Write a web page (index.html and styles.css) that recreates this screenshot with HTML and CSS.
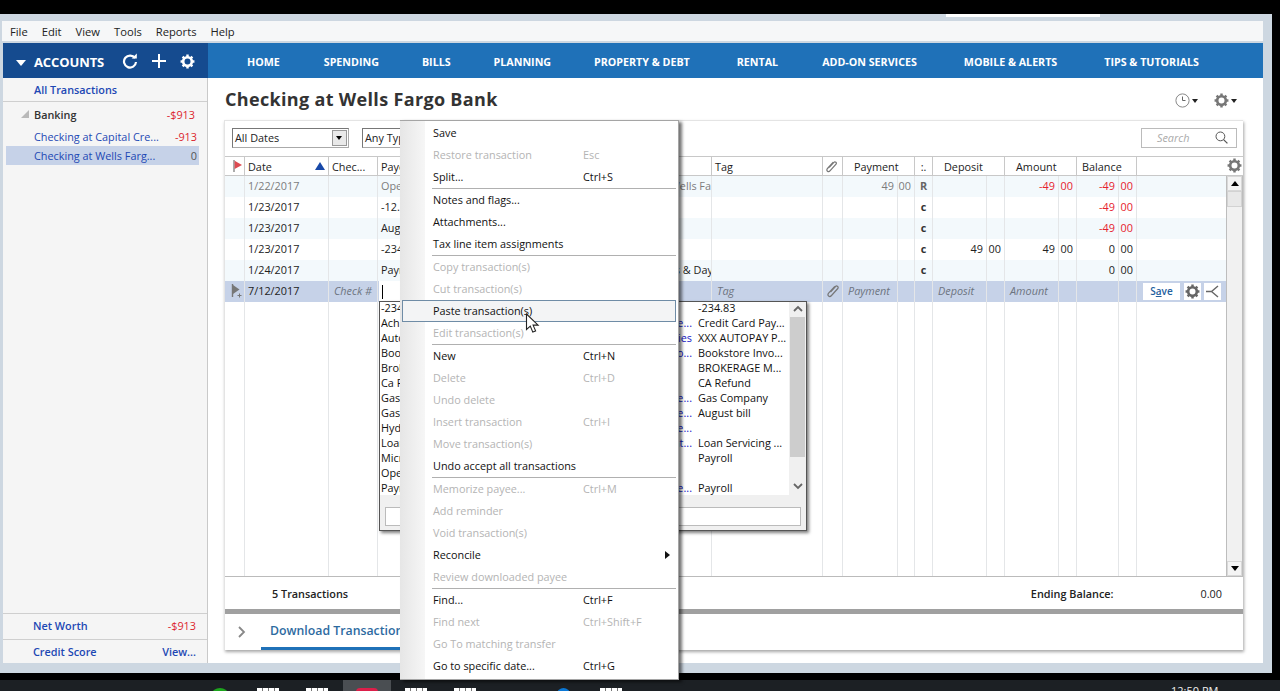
FILE: index.html
```html
<!DOCTYPE html>
<html lang="en">
<head>
<meta charset="utf-8">
<title>Checking at Wells Fargo Bank</title>
<link rel="stylesheet" href="styles.css">
</head>
<body>
<svg class="defs" width="0" height="0" aria-hidden="true">
  <symbol id="gear" viewBox="0 0 16 16">
    <circle cx="8" cy="8" r="4.6" fill="none" stroke="currentColor" stroke-width="2.8"/>
    <path d="M8 .6v3M8 12.4v3M.6 8h3M12.4 8h3M2.8 2.8 4.9 4.9M11.1 11.1l2.1 2.1M13.2 2.8 11.1 4.9M4.9 11.1l-2.1 2.1" stroke="currentColor" stroke-width="2.6" fill="none"/>
  </symbol>
</svg>

<div class="desk-top"><span class="desk-strip"></span></div>

<div class="window">
  <div class="menubar">
    <span>File</span><span>Edit</span><span>View</span><span>Tools</span><span>Reports</span><span>Help</span>
  </div>
  <div class="app">
    <header class="app-head">
      <div class="acc-head">
        <span class="acc-tri"></span>
        <span class="acc-label">ACCOUNTS</span>
        <svg class="acc-ico" width="16" height="16" viewBox="0 0 16 16"><path d="M13 5.2A6 6 0 1 0 14 9" fill="none" stroke="#fff" stroke-width="2.2"/><path d="M9.6 5.6h5.2V.6z" fill="#fff"/></svg>
        <svg class="acc-ico" width="16" height="16" viewBox="0 0 16 16"><path d="M8 1v14M1 8h14" stroke="#fff" stroke-width="2"/></svg>
        <svg class="acc-ico acc-gear" width="15" height="15"><use href="#gear"/></svg>
      </div>
      <nav class="nav">
        <span>HOME</span><span>SPENDING</span><span>BILLS</span><span>PLANNING</span><span>PROPERTY &amp; DEBT</span><span>RENTAL</span><span>ADD-ON SERVICES</span><span>MOBILE &amp; ALERTS</span><span>TIPS &amp; TUTORIALS</span>
      </nav>
    </header>
    <div class="app-body">
      <aside class="sidebar">
        <div class="side-all">All Transactions</div>
        <div class="side-group"><span class="side-open"></span><span class="side-gname">Banking</span><span class="neg">-$913</span></div>
        <div class="side-acct"><span class="link">Checking at Capital Cre...</span><span class="neg">-913</span></div>
        <div class="side-acct is-sel"><span class="link">Checking at Wells Farg...</span><span class="zero">0</span></div>
        <div class="side-fill"></div>
        <div class="side-foot side-net"><b class="link">Net Worth</b><span class="neg">-$913</span></div>
        <div class="side-foot side-last"><b class="link">Credit Score</b><b class="link">View...</b></div>
      </aside>
      <main class="main">
        <div class="title-row">
          <h1>Checking at Wells Fargo Bank</h1>
          <div class="title-tools">
            <svg width="15" height="15" viewBox="0 0 15 15"><circle cx="7.5" cy="7.5" r="6.6" fill="none" stroke="#888"/><path d="M7.5 3.5v4h3" fill="none" stroke="#666"/></svg><i class="caret"></i>
            <svg class="tool-gear" width="15" height="15"><use href="#gear"/></svg><i class="caret"></i>
          </div>
        </div>
        <section class="card">
          <div class="filters">
            <div class="sel sel-dates"><span>All Dates</span><i class="sel-btn"></i></div>
            <div class="sel sel-type"><span>Any Type</span></div>
            <div class="search"><span>Search</span><svg width="13" height="13" viewBox="0 0 13 13"><circle cx="5.4" cy="5.4" r="4.4" fill="none" stroke="#555"/><path d="m8.6 8.6 3.8 3.8" stroke="#555" stroke-width="1.3"/></svg></div>
          </div>
          <div class="thead cols-head">
            <div class="th"><svg width="10" height="12" viewBox="0 0 10 12"><path d="M1 0v12" stroke="#888" stroke-width="1.4"/><path d="M1.6 .8 9 5 1.6 9z" fill="#dd4b52"/></svg></div>
            <div class="th th-date">Date<i class="sort"></i></div>
            <div class="th">Chec...</div>
            <div class="th">Payee</div>
            <div class="th">Category</div>
            <div class="th">Tag</div>
            <div class="th th-c th-clip"><svg width="13" height="14" viewBox="0 0 14 15"><path d="M3.500 8 8.500 2.500c1.300-1.300 3.600.5 2.300 2L4.500 11.500c-2 2.300-4.700-.1-2.900-2.400L7.800 2.300" fill="none" stroke="#777" stroke-width="1.300"/></svg></div>
            <div class="th th-amt">Payment</div>
            <div class="th th-c">:.</div>
            <div class="th th-amt">Deposit</div>
            <div class="th th-amt">Amount</div>
            <div class="th th-bal">Balance</div>
            <div class="th th-gear"><svg width="15" height="15"><use href="#gear"/></svg></div>
          </div>
          <div class="tbody">
            <div class="rows">
              <div class="row alt dim">
                <div></div><div>1/22/2017</div><div></div><div>Opening Balance</div><div class="clip">[Checking at Wells Fargo]</div><div></div><div></div><div class="num">49</div><div class="num">00</div><div class="mk">R</div><div></div><div></div><div class="num neg">-49</div><div class="num neg">00</div><div class="num neg">-49</div><div class="num neg">00</div><div class="blank"></div>
              </div>
              <div class="row">
                <div></div><div>1/23/2017</div><div></div><div>-12.50</div><div></div><div></div><div></div><div></div><div></div><div class="mk">c</div><div></div><div></div><div></div><div></div><div class="num neg">-49</div><div class="num neg">00</div><div class="blank"></div>
              </div>
              <div class="row alt">
                <div></div><div>1/23/2017</div><div></div><div>August bill</div><div></div><div></div><div></div><div></div><div></div><div class="mk">c</div><div></div><div></div><div></div><div></div><div class="num neg">-49</div><div class="num neg">00</div><div class="blank"></div>
              </div>
              <div class="row">
                <div></div><div>1/23/2017</div><div></div><div>-234.83</div><div></div><div></div><div></div><div></div><div></div><div class="mk">c</div><div class="num">49</div><div class="num">00</div><div class="num">49</div><div class="num">00</div><div class="num">0</div><div class="num">00</div><div class="blank"></div>
              </div>
              <div class="row alt">
                <div></div><div>1/24/2017</div><div></div><div>Payroll</div><div class="clip clip-far">Kids' Activities &amp; Daycare</div><div></div><div></div><div></div><div></div><div class="mk">c</div><div></div><div></div><div></div><div></div><div class="num">0</div><div class="num">00</div><div class="blank"></div>
              </div>
              <div class="row edit">
                <div class="edit-flag"><svg width="12" height="14" viewBox="0 0 12 14"><path d="M1.500 0v13" stroke="#777" stroke-width="1.400"/><path d="M2 1l6.500 4.500L2 10z" fill="#777"/><path d="M8.500 9.500v4M6.500 11.500h4" stroke="#777"/></svg></div>
                <div>7/12/2017</div>
                <div class="ph ph-r">Check #</div>
                <div class="edit-payee"><i class="text-caret"></i></div>
                <div></div>
                <div class="ph">Tag</div>
                <div class="edit-clip"><svg width="14" height="15" viewBox="0 0 14 15"><path d="M3.500 8 8.500 2.500c1.300-1.300 3.600.5 2.300 2L4.500 11.500c-2 2.300-4.700-.1-2.900-2.400L7.800 2.300" fill="none" stroke="#777" stroke-width="1.200"/></svg></div>
                <div class="ph">Payment</div><div></div><div></div>
                <div class="ph">Deposit</div><div></div>
                <div class="ph">Amount</div><div></div>
                <div></div><div></div>
                <div class="edit-acts">
                  <span class="btn-save">S<u>a</u>ve</span>
                  <span class="btn-ico"><svg width="15" height="15"><use href="#gear"/></svg></span>
                  <span class="btn-ico"><svg width="15" height="13" viewBox="0 0 15 13"><path d="M1 6.500h5.500L13 1M6.500 6.500 13 12" fill="none" stroke="#666" stroke-width="1.400"/></svg></span>
                </div>
              </div>
              <div class="row filler">
                <div></div><div></div><div></div><div></div><div></div><div></div><div></div><div></div><div></div><div></div><div></div><div></div><div></div><div></div><div></div><div></div><div class="blank"></div>
              </div>
            </div>
            <div class="vscroll">
              <span class="vs-btn"><i class="up"></i></span>
              <span class="vs-thumb"></span>
              <span class="vs-track"></span>
              <span class="vs-btn"><i class="down"></i></span>
            </div>
          </div>
          <div class="summary"><b>5 Transactions</b><b class="end-l">Ending Balance:</b><span class="end-v">0.00</span></div>
          <div class="split-bar"></div>
          <div class="tabs">
            <svg width="10" height="14" viewBox="0 0 10 14"><path d="m2 2 5 5-5 5" fill="none" stroke="#888" stroke-width="1.800"/></svg>
            <span class="tab">Download Transactions</span>
          </div>
        </section>
      </main>
    </div>
  </div>
</div>

<div class="taskbar">
  <i class="tb tb-g"></i><i class="tb tb-w"></i><i class="tb tb-w"></i><span class="tb-active"><i class="tb tb-r"></i></span><i class="tb tb-w"></i><i class="tb tb-w"></i><i class="tb tb-b"></i><i class="tb tb-w"></i>
  <span class="clock">12:50 PM</span>
</div>

<div class="payee-drop">
  <div class="pd-main">
    <div class="pd-list">
      <div class="pd-row"><span>-234.83</span><span></span><span>-234.83</span></div>
      <div class="pd-row"><span>Ach Payment</span><span>Credit Card Payme...</span><span>Credit Card Pay...</span></div>
      <div class="pd-row"><span>Autopay</span><span>Bills &amp; Utilities</span><span>XXX AUTOPAY P...</span></div>
      <div class="pd-row"><span>Bookstore</span><span>Shopping:Bo...</span><span>Bookstore Invo...</span></div>
      <div class="pd-row"><span>Brokerage</span><span></span><span>BROKERAGE M...</span></div>
      <div class="pd-row"><span>Ca Refund</span><span></span><span>CA Refund</span></div>
      <div class="pd-row"><span>Gas Company</span><span>Utilities:Gas &amp; Ele...</span><span>Gas Company</span></div>
      <div class="pd-row"><span>Gas Bill</span><span>Utilities:Gas &amp; Ele...</span><span>August bill</span></div>
      <div class="pd-row"><span>Hydro</span><span>Utilities:Gas &amp; Ele...</span><span></span></div>
      <div class="pd-row"><span>Loan</span><span>Mortgage &amp; Rent...</span><span>Loan Servicing ...</span></div>
      <div class="pd-row"><span>Microsoft</span><span></span><span>Payroll</span></div>
      <div class="pd-row"><span>Opening Balance</span><span></span><span></span></div>
      <div class="pd-row"><span>Payroll</span><span>Income:Private...</span><span>Payroll</span></div>
    </div>
    <div class="pd-scroll">
      <svg width="10" height="7" viewBox="0 0 10 7"><path d="m1 6 4-4 4 4" fill="none" stroke="#666" stroke-width="1.800"/></svg>
      <span class="pd-thumb"></span>
      <svg width="10" height="7" viewBox="0 0 10 7"><path d="m1 1 4 4 4-4" fill="none" stroke="#666" stroke-width="1.800"/></svg>
    </div>
  </div>
  <div class="pd-foot"><div class="pd-input"></div></div>
</div>

<div class="ctx">
  <div class="mi"><span>Save</span></div>
  <div class="mi off"><span>Restore transaction</span><kbd>Esc</kbd></div>
  <div class="mi"><span>Split...</span><kbd>Ctrl+S</kbd></div>
  <hr>
  <div class="mi"><span>Notes and flags...</span></div>
  <div class="mi"><span>Attachments...</span></div>
  <div class="mi"><span>Tax line item assignments</span></div>
  <hr>
  <div class="mi off"><span>Copy transaction(s)</span></div>
  <div class="mi off"><span>Cut transaction(s)</span></div>
  <div class="mi hot"><span>Paste transaction(s)</span></div>
  <div class="mi off"><span>Edit transaction(s)</span></div>
  <hr>
  <div class="mi"><span>New</span><kbd>Ctrl+N</kbd></div>
  <div class="mi off"><span>Delete</span><kbd>Ctrl+D</kbd></div>
  <div class="mi off"><span>Undo delete</span></div>
  <div class="mi off"><span>Insert transaction</span><kbd>Ctrl+I</kbd></div>
  <div class="mi off"><span>Move transaction(s)</span></div>
  <div class="mi"><span>Undo accept all transactions</span></div>
  <hr>
  <div class="mi off"><span>Memorize payee...</span><kbd>Ctrl+M</kbd></div>
  <div class="mi off"><span>Add reminder</span></div>
  <div class="mi off"><span>Void transaction(s)</span></div>
  <div class="mi"><span>Reconcile</span><i class="sub"></i></div>
  <div class="mi off"><span>Review downloaded payee</span></div>
  <hr>
  <div class="mi"><span>Find...</span><kbd>Ctrl+F</kbd></div>
  <div class="mi off"><span>Find next</span><kbd>Ctrl+Shift+F</kbd></div>
  <div class="mi off"><span>Go To matching transfer</span></div>
  <div class="mi"><span>Go to specific date...</span><kbd>Ctrl+G</kbd></div>
</div>

<svg class="pointer" width="16" height="21" viewBox="0 0 16 21"><path d="M1.500 1v15.500l3.800-3.400 2.500 6 2.800-1.200-2.500-5.800h5z" fill="#fff" stroke="#222" stroke-width="1.100"/></svg>
</body>
</html>
```

FILE: styles.css
```css
* { box-sizing: border-box; }
html, body { margin: 0; height: 691px; overflow: hidden; }
body {
  position: relative;
  background: #000;
  color: #222;
  font: 10.85px/15px "Open Sans", "Noto Sans", sans-serif;
  display: flex;
  flex-direction: column;
}
.defs { position: absolute; }

.desk-top { height: 14px; position: relative; }
.desk-strip { position: absolute; left: 946px; top: 14px; width: 154px; height: 3px; background: #fff; z-index: 2; }

.window {
  width: 1272px;
  height: 659px;
  background: #cdd7e1;
  padding: 7px 9px 10px 2px;
  display: flex;
  flex-direction: column;
}
.menubar {
  height: 20px;
  background: #f6f7f8;
  display: flex;
  align-items: center;
  gap: 14px;
  padding-left: 8px;
  font-size: 11.2px;
  color: #222;
  flex: none;
}
.app { flex: 1; margin: 2px 0 0 1px; display: flex; flex-direction: column; min-height: 0; }
.app-head { height: 35px; display: flex; flex: none; background: #1f71b8; color: #fff; }
.acc-head { width: 205px; background: #154b8f; display: flex; align-items: center; position: relative; padding: 4px 0 0 13px; }
.acc-tri { width: 0; height: 0; border: 5px solid transparent; border-top: 6px solid #fff; border-bottom: 0; margin-right: 8px; }
.acc-label { font-weight: 700; font-size: 13px; width: 88px; letter-spacing: -.1px; }
.acc-ico { margin: -3px 13px 0 0; }
.acc-gear { color: #fff; margin-right: 0; }
.nav { display: flex; align-items: center; gap: 43px; padding: 4px 0 0 39px; font-weight: 700; font-size: 10.7px; }
.nav span:nth-child(2) { margin-left: 1px; }
.nav span:nth-child(6) { margin-left: 4px; }
.nav span:nth-child(7) { margin-left: 1px; }
.nav span:nth-child(8) { margin-left: 4px; }
.nav span:nth-child(9) { margin-left: 4px; }

.app-body { flex: 1; display: flex; min-height: 0; background: #fff; }
.sidebar {
  width: 205px;
  flex: none;
  background: #f5f5f5;
  border-right: 1px solid #c9c9c9;
  display: flex;
  flex-direction: column;
}
.link { color: #1d48b4; }
.side-foot b { font-weight: 600; }
.neg { color: #dc1f2d; }
.row > .neg { color: #e6222e; }
.zero { color: #555; }
.side-all { height: 24px; padding: 4px 0 0 31px; font-weight: 600; color: #1d48b4; border-bottom: 1px solid #cfcfcf; }
.side-group { height: 25px; flex: none; display: flex; align-items: center; padding: 0 12px 1px 18px; }
.side-open { width: 0; height: 0; border-left: 8px solid transparent; border-bottom: 8px solid #aaa; margin-right: 5px; opacity: .8; }
.side-gname { flex: 1; font-weight: 600; color: #333; }
.side-acct { height: 19px; flex: none; margin: 0 8px 0 3px; padding: 0 2px 0 28px; display: flex; justify-content: space-between; align-items: center; }
.side-acct.is-sel { background: #c6d2e8; }
.side-fill { flex: 1; }
.side-foot { height: 26px; flex: none; border-top: 1px solid #cfcfcf; display: flex; align-items: center; justify-content: space-between; padding: 0 11px 0 30px; }
.side-net { padding-bottom: 2px; }
.side-last { height: 24px; }

.main { flex: 1; min-width: 0; display: flex; flex-direction: column; padding: 0 20px 13px 16px; }
.title-row { height: 42px; flex: none; display: flex; align-items: center; justify-content: space-between; padding: 0 1px; }
h1 { margin: 0; font-size: 18px; font-weight: 700; color: #333; letter-spacing: .33px; }
.title-tools { display: flex; align-items: center; margin: 2px 5px 0 0; color: #777; }
.caret { width: 0; height: 0; border: 3.5px solid transparent; border-top: 4px solid #222; border-bottom: 0; margin: 2px 0 0 2px; }
.tool-gear { margin-left: 16px; }

.card {
  flex: 1;
  min-height: 0;
  background: #fff;
  display: flex;
  flex-direction: column;
  border: 1px solid #e4e4e4;
  border-width: 1px 0 0 1px;
  box-shadow: 1px 2px 3px rgba(0, 0, 0, .35);
}
.filters { height: 35px; flex: none; display: flex; align-items: center; padding: 0 6px 2px 7px; }
.sel {
  height: 20px;
  border: 1px solid #aaa;
  border-top-color: #777;
  border-left-color: #777;
  display: flex;
  align-items: center;
  justify-content: space-between;
  padding: 0 1px 0 2px;
  background: #fff;
  color: #222;
}
.sel-dates { width: 117px; margin-right: 13px; }
.sel-type { width: 120px; }
.sel-btn { width: 15px; height: 16px; background: #e9e9e9; border: 1px solid #999; position: relative; }
.sel-btn::after { content: ""; position: absolute; left: 3px; top: 5px; border: 3.5px solid transparent; border-top: 4px solid #000; border-bottom: 0; }
.search { margin-left: auto; width: 96px; height: 20px; border: 1px solid #bbb; display: flex; align-items: center; justify-content: space-between; padding: 0 8px 0 15px; font-style: italic; color: #aaa; }

.cols-head, .row {
  display: grid;
  grid-template-columns: 20px 84px 49px 222px 112px 111px 20px 55px 17px 18px 54px 18px 54px 18px 42px 18px 89px;
}
.thead { height: 20px; flex: none; border-top: 1px solid #c8c8c8; border-bottom: 1px solid #c8c8c8; }
.cols-head { grid-template-columns: 20px 84px 49px 222px 112px 111px 20px 72px 18px 72px 72px 60px 106px; }
.th { border-right: 1px solid #c8c8c8; padding: 2px 0 0 3px; position: relative; color: #222; white-space: nowrap; overflow: hidden; }
.th:first-child { padding: 3px 0 0 8px; }
.th-c { text-align: center; padding-left: 0; }
.th-clip { padding-top: 3px; }
.th-amt { padding-left: 11px; }
.th-bal { padding-left: 5px; }
.th-gear { border-right: 0; text-align: right; padding: 1px 1px 0 0; color: #777; }
.sort { position: absolute; right: 3px; top: 5px; border: 5px solid transparent; border-bottom: 8px solid #1748a8; border-top: 0; }

.tbody { flex: 1; min-height: 0; display: flex; }
.rows { flex: 1; min-width: 0; display: flex; flex-direction: column; }
.row { height: 21px; flex: none; line-height: 20px; }
.row > div { border-right: 1px solid #e4e6e8; padding: 0 0 0 3px; white-space: nowrap; overflow: hidden; }
.row > .blank { border-right: 0; }
.row.alt { background: #f3f9fc; }
.dim { color: #7c7c7c; }
.row > .num { text-align: right; padding: 0 3px 0 0; }
.row > .mk { text-align: center; font-weight: 700; padding: 0; color: #333; }
.dim > .mk { color: #666; }
.row > .clip { padding-left: 5px; }
.row > .clip-far { padding-left: 9px; }
.row.edit { background: #c6d2e8; }
.ph { font-style: italic; color: #6d7480; }
.row > .ph { padding-left: 5px; }
.edit-flag { padding: 3px 0 0 6px !important; }
.row > .edit-payee { background: #fff; margin-left: 1px; padding-left: 3px; display: flex; align-items: center; }
.text-caret { width: 1px; height: 14px; background: #000; }
.edit-clip { padding: 3px 0 0 4px !important; }
.edit-acts { border-right: 0 !important; display: flex; align-items: center; gap: 3px; padding: 0 0 0 6px !important; }
.btn-save { background: #fff; width: 37px; height: 17px; line-height: 17px; text-align: center; font-weight: 600; color: #23609e; font-size: 10px; margin-right: 1px; }
.btn-ico { background: #fff; width: 17px; height: 17px; display: flex; align-items: center; justify-content: center; color: #666; }
.row.filler { flex: 1; height: auto; }

.vscroll { width: 17px; flex: none; display: flex; flex-direction: column; background: #f1f1f1; border: 1px solid #bdbdbd; border-width: 0 1px 0 1px; }
.vs-btn { height: 15px; background: #f4f4f4; border: 1px solid #d8d8d8; display: flex; align-items: center; justify-content: center; flex: none; }
.vs-btn .up { border: 4px solid transparent; border-bottom: 5px solid #000; border-top: 0; }
.vs-btn .down { border: 4px solid transparent; border-top: 5px solid #000; border-bottom: 0; }
.vs-thumb { height: 16px; background: #e8e8e8; border: 1px solid #d2d2d2; flex: none; }
.vs-track { flex: 1; }

.summary { height: 33px; flex: none; display: flex; align-items: center; border-top: 1px solid #bbb; padding: 0 21px 0 47px; color: #222; }
.summary b { font-weight: 600; }
.end-l { margin-left: auto; margin-right: 87px; }
.split-bar { height: 5px; background: #a0a0a0; flex: none; }
.tabs { height: 36px; flex: none; display: flex; align-items: center; padding-left: 12px; }
.tab { margin-left: 14px; height: 100%; display: flex; align-items: center; padding: 0 30px 0 9px; font-size: 12.3px; font-weight: 600; color: #2d6a9f; border-bottom: 3px solid #1f71b8; }

.taskbar { position: absolute; left: 0; right: 0; top: 680px; height: 11px; background: #1c2024; display: flex; padding-left: 212px; align-items: flex-start; overflow: hidden; }
.tb { width: 22px; height: 12px; margin: 8px 27px 0 0; flex: none; display: block; }
.tb-g { width: 16px; margin-right: 29px; background: #1da51d; border-radius: 50% 50% 0 0; }
.tb-w { background: repeating-linear-gradient(90deg, #fff 0 5px, #777 5px 6px); }
.tb-r { background: #dc1f4a; margin: 8px auto 0; border-radius: 4px 4px 0 0; }
.tb-b { width: 13px; background: #0a78d6; border-radius: 50% 50% 0 0; margin-left: 54px; margin-right: 30px; }
.tb-active { width: 48px; height: 11px; background: #4a4e52; margin: 0 14px 0 -12px; flex: none; }
.clock { position: absolute; left: 1171px; top: 3px; color: #eee; font-size: 11px; }

.payee-drop {
  position: absolute;
  left: 379px;
  top: 301px;
  width: 428px;
  height: 230px;
  border: 1px solid #555;
  background: #f0f0f0;
  box-shadow: 2px 2px 3px rgba(0, 0, 0, .5);
  display: flex;
  flex-direction: column;
  color: #111;
  z-index: 3;
}
.pd-main { height: 193px; display: flex; }
.pd-list { flex: 1; background: #fff; }
.pd-row { display: grid; grid-template-columns: 180px 133px 92px; height: 15px; line-height: 12px; white-space: nowrap; padding-left: 1px; }
.pd-row > span { overflow: hidden; }
.pd-row > span:nth-child(2) { text-align: right; color: #1414c8; padding-right: 2px; }
.pd-row > span:nth-child(3) { padding-left: 4px; }
.pd-scroll { width: 17px; display: flex; flex-direction: column; align-items: center; padding: 3px 0; }
.pd-thumb { width: 15px; height: 140px; background: #cdcdcd; margin: 5px 0 26px; }
.pd-foot { flex: 1; padding: 12px 5px 0 5px; }
.pd-input { height: 19px; background: #fff; border: 1px solid #bbb; }

.ctx {
  position: absolute;
  left: 400px;
  top: 120px;
  width: 279px;
  height: 560px;
  padding: 1px 2px 3px 2px;
  background: linear-gradient(90deg, #e6e6e6 0, #f6f6f6 25px, #fff 25px);
  border: 1px solid #a5a5a5;
  border-left: 0;
  box-shadow: 3px 2px 3px rgba(0, 0, 0, .55);
  color: #111;
  z-index: 4;
}
.mi { height: 22px; display: flex; align-items: center; padding: 0 0 2px 30px; position: relative; border: 1px solid transparent; }
.mi > span { width: 150px; white-space: nowrap; }
.mi kbd { font: inherit; }
.off { color: #b4b4b4; }
.hot { background: #f3f4f5; border-color: #6f8ca6; }
.ctx hr { height: 1px; margin: 0 0 0 30px; border: 0; background: #b0b0b0; }
.sub { position: absolute; left: 262px; top: 6px; border: 4px solid transparent; border-left: 5px solid #111; border-right: 0; }

.pointer { position: absolute; left: 525px; top: 313px; z-index: 5; }
```
